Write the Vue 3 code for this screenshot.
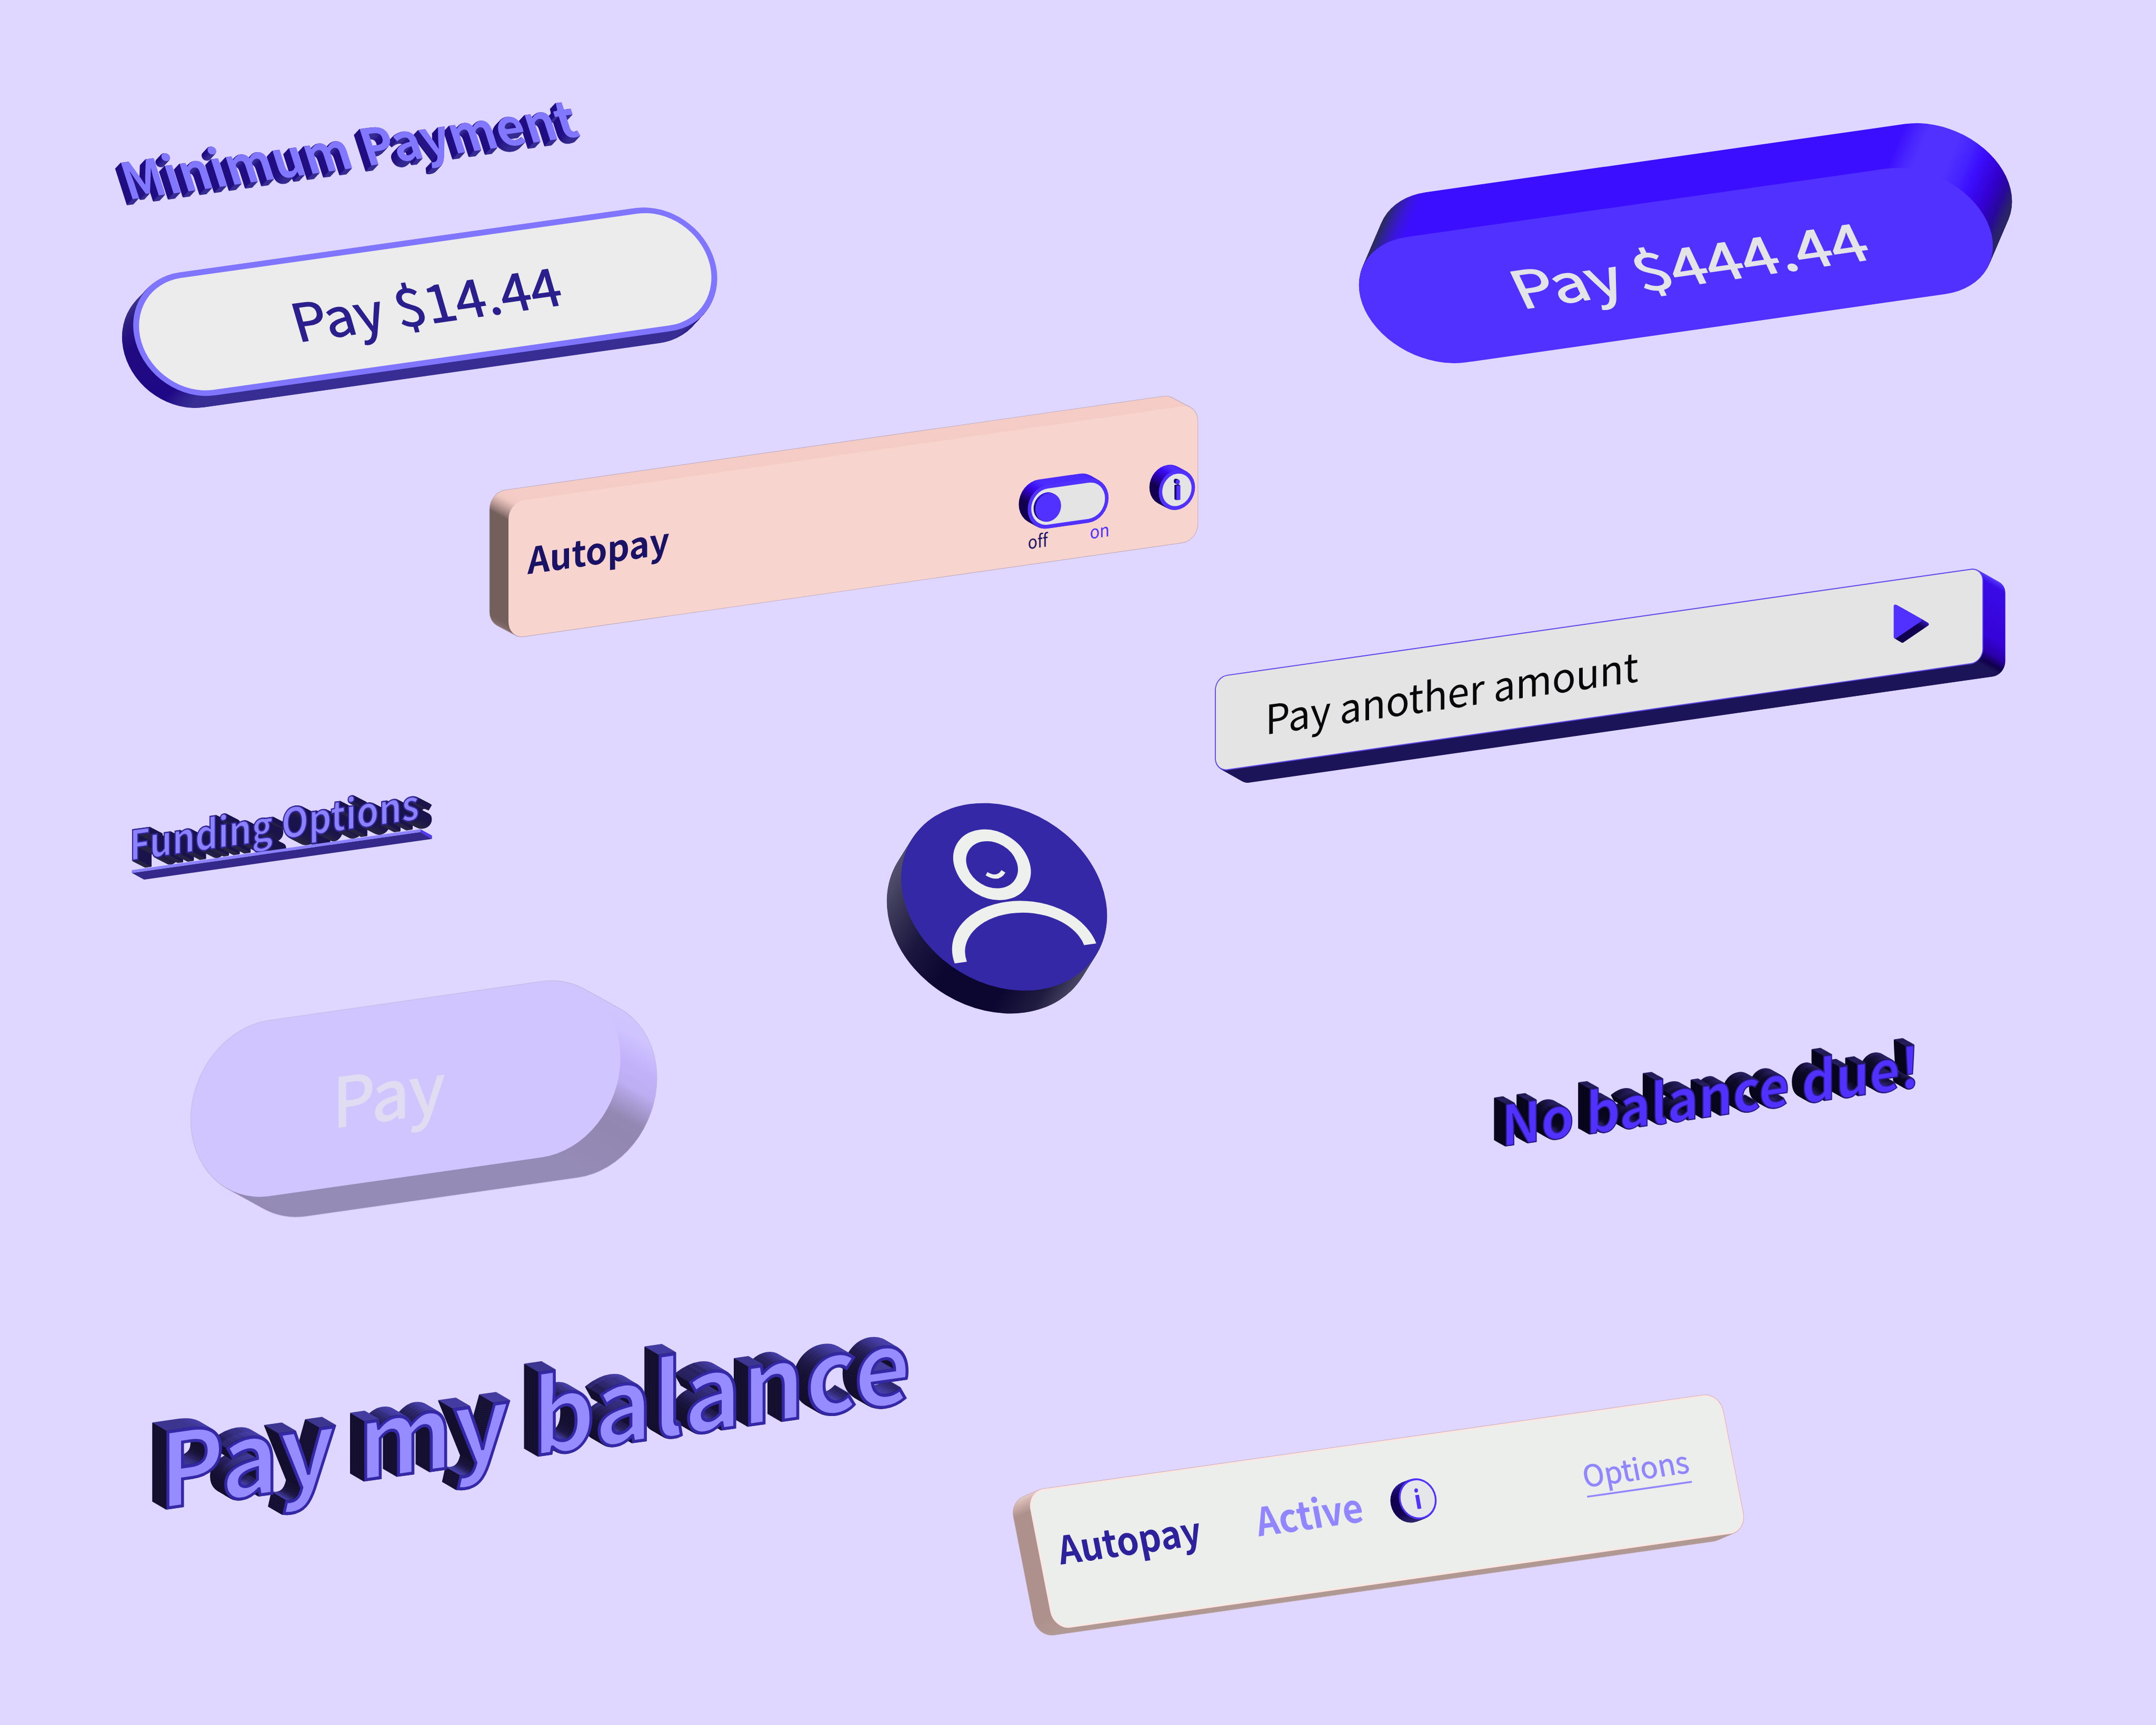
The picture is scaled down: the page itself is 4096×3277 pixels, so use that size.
<script setup>
const FAMILY = '"Noto Sans CJK SC", "Noto Sans", sans-serif'
const pen = document.createElement('canvas').getContext('2d')

// Slices of an extruded body, ordered from the back plane to the front one.
// The cap offsets belong to the copy that leaves only the upper/lower walls in view.
function slices([dx, dy], density = 1.1) {
  const n = Math.ceil(Math.hypot(dx, dy) * density)
  return Array.from({ length: n }, (_, i) => {
    const k = 1 - i / n
    return {
      key: i,
      x: dx * k,
      y: dy * k,
      capY: dy * k + Math.sign(dy) * 0.5,
      sideX: dx * k + Math.sign(dx) * 0.8,
      sideY: dy * k - dy / n,
    }
  })
}

// Scales a label so that its ink has the given cap height and length.
function fit(label) {
  pen.font = `${label.weight} 1000px ${FAMILY}`
  const size = (label.cap * 1000) / pen.measureText('H').actualBoundingBoxAscent
  const m = pen.measureText(label.text)
  const left = (-m.actualBoundingBoxLeft * size) / 1000
  const ink = ((m.actualBoundingBoxRight + m.actualBoundingBoxLeft) * size) / 1000
  const sx = label.length / ink
  const [a, b, c, d] = label.axes
  return {
    ...label,
    size,
    transform: `matrix(${a * sx} ${b * sx} ${c} ${d} ${label.at[0]} ${label.at[1]}) translate(${-left || 0} 0)`,
  }
}

const solid = (s) => ({
  ...s,
  slices: slices(s.depth),
  matrix: `matrix(${s.axes.join(' ')} ${s.center.join(' ')})`,
  vector: s.vector || [0, -s.h / 2, 0, s.h / 2],
})

const WALL = [0.91, -0.1297, 0, 1]
const LEAN = [0.91, -0.1293, 0.195, 1]
const LEFT = [1, -0.141, 0.29, 1]
const WIDE = [1.144, -0.163, 0.475, 1]

const solids = [
  { id: 'pay-minimum', axes: LEFT, center: [1065, 755.6], w: 1450, h: 308, r: 154, depth: [-28, 30], face: '#8075ff', inset: 14, inner: '#ececec',
    stops: [[0, '#4a4590'], [0.3, '#2a1c80'], [0.5, '#200a80'], [0.9, '#1f0886'], [0.985, '#372d93'], [1, '#372d93']] },
  { id: 'pay-full', axes: WIDE, center: [4197.5, 664.9], w: 1362, h: 314, r: 157, depth: [48, -112], face: '#5131ff', vector: [-529.8, -291.4, 541.3, 297.7],
    stops: [[0, '#2b2b60'], [0.012, '#2f2390'], [0.035, '#3a16dc'], [0.055, '#3c0eff'], [0.81, '#3c0eff'], [0.83, '#4722ff'], [0.85, '#5031ff'], [0.9, '#5031ff'], [0.925, '#4522ff'], [0.942, '#3c0eff'], [0.972, '#3300cf'], [0.988, '#28089a'], [0.998, '#2a2468']] },
  { id: 'autopay-off', axes: WALL, center: [2136.7, 1305.8], w: 1897, h: 341, r: 42, depth: [-47, -25], face: '#f7d4ce', edge: '#b9a6bd',
    stops: [[0, '#f5ccc6'], [0.02, '#f0c8c2'], [0.11, '#8a726f'], [0.13, '#735f5c'], [0.9, '#735f5c'], [1, '#8f7875']] },
  { id: 'toggle', axes: WALL, center: [2675.3, 1261.3], w: 222.6, h: 110, r: 55, depth: [-22.4, -12.7], face: '#5131ff', inset: 9.7, inner: '#e4e4e4',
    stops: [[0, '#4c2cff'], [0.08, '#3a0cf0'], [0.2, '#2a00a8'], [0.36, '#12004e'], [0.8, '#12004e'], [1, '#2a2868']] },
  { id: 'knob', axes: WALL, center: [2625.3, 1270.8], w: 71, h: 71, r: 35.5, depth: [-4.2, -2], face: '#5131ff',
    stops: [[0, '#3a18e0'], [0.4, '#1a066e'], [1, '#12004e']] },
  { id: 'info-off', axes: WALL, center: [2947.7, 1226.7], w: 100, h: 100, r: 50, depth: [-23.4, -12.5], face: '#5131ff', inset: 9.6, inner: '#e4e4e4',
    stops: [[0, '#5031ff'], [0.06, '#3a0cf0'], [0.2, '#2a00a8'], [0.38, '#12004e'], [0.8, '#12004e'], [1, '#2a2868']] },
  { id: 'another-amount', axes: WALL, center: [4005.2, 1676.6], w: 2115, h: 239, r: 34, depth: [55, 31], face: '#5f48ec', inset: 2.6, inner: '#e4e4e4',
    stops: [[0, '#6a5cff'], [0.05, '#5236ff'], [0.14, '#3a0be6'], [0.7, '#3503d6'], [0.87, '#2a00a8'], [0.95, '#10004a'], [0.985, '#1c1458'], [1, '#1c1458']] },
  { id: 'pay-disabled', axes: [0.895, -0.1275, 0, 1], center: [1016, 2727], w: 1202, h: 440, r: 220, depth: [91, 50], face: '#d1c5ff', edge: '#c0b6e2',
    stops: [[0, '#d1c5ff'], [0.3, '#d0c4ff'], [0.5, '#c1b2fa'], [0.62, '#bcaef3'], [0.78, '#9288b2'], [0.85, '#9187b0'], [1, '#948bb6']] },
  { id: 'autopay-on', axes: LEAN, center: [3473.3, 3785.3], w: 1907, h: 347.4, r: 46, depth: [-42, 18], face: '#ffe4df', inset: 3.4, inner: '#eceeec', edge: '#c4adb8',
    stops: [[0, '#e8cdc8'], [0.08, '#c9aaa5'], [0.14, '#ae918d'], [0.9, '#ae918d'], [1, '#b09893']] },
  { id: 'info-on', axes: LEAN, center: [3550.8, 3753.8], w: 102, h: 102, r: 51, depth: [-21, 8], face: '#5131ff', inset: 4.8, inner: '#e5e6e9',
    stops: [[0, '#3a22b0'], [0.2, '#1c0a70'], [0.4, '#12004e'], [0.8, '#140452'], [1, '#2c2468']] },
].map(solid)

const labels = [
  { text: 'Pay $14.44', axes: LEFT, at: [758.5, 855.2], cap: 93.5, length: 654, weight: 400, fill: '#2a1f8c', bolden: 2 },
  { text: 'Pay $444.44', axes: WIDE, at: [3826, 772], cap: 91, length: 755, weight: 400, fill: '#e4e4e8', bolden: 2.4 },
  { text: 'Autopay', axes: WALL, at: [1320, 1437.9], cap: 68, length: 391, weight: 700, fill: '#1a1264' },
  { text: 'off', axes: WALL, at: [2576.4, 1375], cap: 33, length: 54, weight: 400, fill: '#1a1264' },
  { text: 'on', axes: WALL, at: [2731.4, 1349.5], cap: 33, length: 48.5, weight: 400, fill: '#5131ff' },
  { text: 'Pay another amount', axes: WALL, at: [3178.2, 1838.7], cap: 74, length: 1017, weight: 400, fill: '#08080a' },
  { text: 'Pay', axes: WALL, at: [848.5, 2822.5], cap: 124, length: 290, weight: 400, fill: '#e0dcf2', bolden: 3.5 },
  { text: 'Autopay', axes: LEAN, at: [2655.5, 3918.6], cap: 71, length: 393, weight: 700, fill: '#2e229c' },
  { text: 'Active', axes: LEAN, at: [3151.6, 3848], cap: 72, length: 291, weight: 700, fill: '#9186ff' },
  { text: 'Options', axes: LEAN, at: [3972.8, 3724.8], cap: 54, length: 285, weight: 400, fill: '#9186ff', bolden: 1 },
].map(fit)

const headings = [
  { id: 'minimum-payment', text: 'Minimum Payment', axes: [1, -0.141, 0.32, 1], at: [330.6, 498.9], cap: 92, length: 1124, weight: 700,
    depth: [-14, 15], fill: '#8277ff', outline: 'none', stroke: 0, side: '#1f0c80', top: '#372d93' },
  { id: 'funding-options', text: 'Funding Options', axes: WALL, at: [331, 2154.5], cap: 77, length: 788, weight: 700,
    depth: [32, 16.5], fill: '#8c81ff', outline: '#34289c', stroke: 3.2, side: '#1a144c', top: '#2a2742' },
  { id: 'no-balance-due', text: 'No balance due!', axes: WALL, at: [3771, 2869.8], cap: 104.5, length: 1127, weight: 700,
    depth: [-28.5, -16], fill: '#5131ff', outline: '#2a1c8c', stroke: 3, side: '#08061c', top: '#2a2364' },
  { id: 'pay-my-balance', text: 'Pay my balance', axes: WALL, at: [417.5, 3777], cap: 192.5, length: 2040, weight: 700,
    depth: [-35, -20.5], fill: '#968bff', outline: '#3428a6', stroke: 7.6, side: '#15102f', top: '#4941ab' },
].map((h) => ({ ...fit(h), slices: slices(h.depth, 0.75) }))

const avatarSlices = slices([-36, 57.5])
const arrowSlices = slices([18, 10.5])
const dotSlices = slices([-5, -2])
</script>

<template>
  <main class="board">
    <svg class="scene" viewBox="0 0 5400 4320">
      <defs>
        <linearGradient
          v-for="s in solids" :id="`wall-${s.id}`" :key="s.id" gradientUnits="userSpaceOnUse"
          :x1="s.vector[0]" :y1="s.vector[1]" :x2="s.vector[2]" :y2="s.vector[3]"
        >
          <stop v-for="[at, color] in s.stops" :key="at" :offset="at" :stop-color="color" />
        </linearGradient>
        <linearGradient id="wall-avatar" gradientUnits="userSpaceOnUse" x1="-200" y1="-150" x2="165" y2="195">
          <stop offset="0" stop-color="#5a5775" />
          <stop offset="0.1" stop-color="#3d3a5a" />
          <stop offset="0.26" stop-color="#1a163e" />
          <stop offset="0.42" stop-color="#0b0730" />
          <stop offset="0.68" stop-color="#0b0730" />
          <stop offset="0.84" stop-color="#1f1b40" />
          <stop offset="0.96" stop-color="#4a4766" />
          <stop offset="1" stop-color="#5a5775" />
        </linearGradient>
        <linearGradient id="wall-arrow" gradientUnits="userSpaceOnUse" x1="0" y1="1545" x2="0" y2="1564">
          <stop offset="0" stop-color="#4a28f0" />
          <stop offset="1" stop-color="#10004f" />
        </linearGradient>
      </defs>

      <g v-for="s in solids" :key="s.id">
        <!-- hairline round the whole silhouette -->
        <template v-if="s.edge">
          <g v-for="p in [...s.slices, { key: 'front', x: 0, y: 0 }]" :key="p.key" :transform="`translate(${p.x} ${p.y})`">
            <rect
              :transform="s.matrix" :x="-s.w / 2" :y="-s.h / 2" :width="s.w" :height="s.h" :rx="s.r"
              :fill="s.edge" :stroke="s.edge" stroke-width="2.4"
            />
          </g>
        </template>
        <g v-for="p in s.slices" :key="p.key" :transform="`translate(${p.x} ${p.y})`">
          <rect
            :transform="s.matrix" :x="-s.w / 2" :y="-s.h / 2" :width="s.w" :height="s.h" :rx="s.r"
            :fill="`url(#wall-${s.id})`"
          />
        </g>
        <g :transform="s.matrix">
          <rect
            :x="-s.w / 2" :y="-s.h / 2" :width="s.w" :height="s.h" :rx="s.r" :fill="s.face"
          />
          <rect
            v-if="s.inset" :x="s.inset - s.w / 2" :y="s.inset - s.h / 2"
            :width="s.w - 2 * s.inset" :height="s.h - 2 * s.inset" :rx="s.r - s.inset" :fill="s.inner"
          />
        </g>
      </g>

      <!-- info glyph on the switched-off card -->
      <g v-for="p in dotSlices" :key="p.key" class="ink-shade" :transform="`translate(${p.x} ${p.y})`">
        <ellipse cx="2950" cy="1206.8" rx="5" ry="5.8" />
        <path d="M2946.6 1216.3l9.8-1.4v36.4l-9.8 1.4z" />
      </g>
      <g class="ink">
        <ellipse cx="2950" cy="1206.8" rx="5" ry="5.8" />
        <path d="M2946.6 1216.3l9.8-1.4v36.4l-9.8 1.4z" />
      </g>

      <!-- info glyph on the active card -->
      <g class="ink">
        <ellipse cx="3547" cy="3732.9" rx="4.6" ry="5.3" />
        <path d="M3544.6 3744.8l9.4-1.4 6 34.6-9.4 1.4z" />
      </g>

      <!-- arrow -->
      <path
        v-for="p in arrowSlices" :key="p.key" class="arrow" fill="url(#wall-arrow)" stroke="url(#wall-arrow)"
        :transform="`translate(${p.x} ${p.y})`" d="M4747 1518L4809 1553L4747 1595Z"
      />
      <path class="arrow arrow-face" d="M4747 1518L4809 1553L4747 1595Z" />

      <!-- avatar -->
      <g v-for="p in avatarSlices" :key="p.key" :transform="`translate(${p.x} ${p.y})`">
        <circle r="235" fill="url(#wall-avatar)" transform="matrix(1.032 -0.1455 0.373 0.9885 2515 2246)" />
      </g>
      <g transform="matrix(1.032 -0.1455 0.373 0.9885 2515 2246)">
        <circle r="235" fill="#3428a6" />
        <g class="person">
          <circle cy="-81.3" r="73.8" />
          <path d="M-157 143.3A157 116 0 0 1 157 143.3" />
          <path class="smile" d="M-20.5 -61.5Q0 -41.5 20.5 -61.5" />
        </g>
      </g>

      <text
        v-for="l in labels" :key="l.at[0]" class="label"
        :transform="l.transform" :font-size="l.size" :font-weight="l.weight"
        :fill="l.fill" :stroke="l.bolden ? l.fill : 'none'" :stroke-width="l.bolden || 0"
      >{{ l.text }}</text>
      <path class="link-line" d="M3975 3748.5L4237.5 3711" />

      <g v-for="h in headings" :key="h.id" class="heading" :stroke-width="h.stroke">
        <template v-for="p in h.slices" :key="p.key">
          <use :href="`#${h.id}`" :x="p.x" :y="p.capY" :fill="h.top" :stroke="h.top" />
          <use :href="`#${h.id}`" :x="p.sideX" :y="p.sideY" :fill="h.side" :stroke="h.side" />
        </template>
        <g :fill="h.fill" :stroke="h.outline">
          <text
            :id="h.id" class="label" :transform="h.transform" :font-size="h.size" :font-weight="h.weight"
          >{{ h.text }}</text>
        </g>
      </g>

      <!-- underline of the funding link -->
      <path fill="#34298a" d="M330 2186L1053 2083.5L1082 2101L361 2202.7Z" />
      <path fill="#5238f4" d="M1053 2076.5L1082 2092.5V2101L1053 2084Z" />
      <path fill="#8c81ff" d="M330 2179L1053 2076.5V2084L330 2186.5Z" />
    </svg>
  </main>
</template>

<style>
body {
  margin: 0;
  background: #dfd7ff;
}
</style>

<style scoped>
.board {
  width: 100vw;
  height: 100vh;
  overflow: hidden;
  background: #dfd7ff;
}

.scene {
  display: block;
  width: 100%;
  height: 100%;
}

.label {
  font-family: "Noto Sans CJK SC", "Noto Sans", sans-serif;
  font-variant-ligatures: none;
  white-space: pre;
}

.heading {
  stroke-linejoin: miter;
  stroke-miterlimit: 3;
}

.ink {
  fill: #5131ff;
}

.ink-shade {
  fill: #1a0a6a;
}

.arrow {
  stroke-width: 8;
  stroke-linejoin: round;
}

.arrow-face {
  fill: #5131ff;
  stroke: #5131ff;
}

.person {
  fill: none;
  stroke: #eef0ee;
  stroke-width: 29.5;
}

.person .smile {
  stroke-width: 10;
}

.link-line {
  stroke: #9186ff;
  stroke-width: 4.5;
}
</style>
